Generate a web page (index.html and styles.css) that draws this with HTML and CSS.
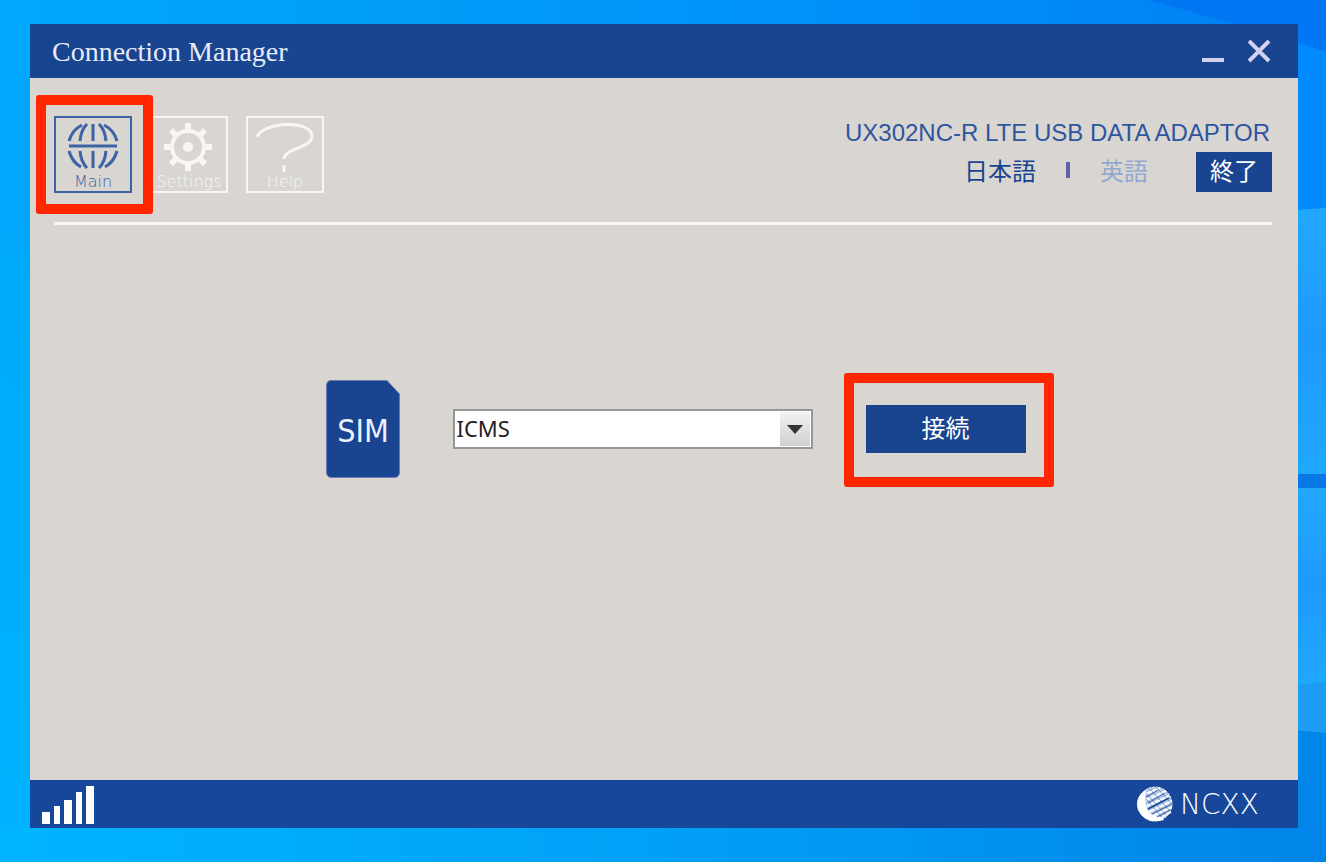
FILE: index.html
```html
<!DOCTYPE html>
<html lang="ja">
	<head>
		<meta charset="UTF-8">
		<meta name="viewport" content="width=device-width, initial-scale=1">
		<title>Connection Manager</title>
		<link rel="stylesheet" href="styles.css">
	</head>
	<body>

		<svg class="wallpaper" viewBox="0 0 1326 862" preserveAspectRatio="none" aria-hidden="true">
			<defs>
				<linearGradient id="pane" x1="0" y1="0" x2="0" y2="1">
					<stop offset="0" stop-color="#22a8ff"/>
					<stop offset=".5" stop-color="#1e9aff"/>
					<stop offset="1" stop-color="#20a8ff"/>
				</linearGradient>
				<linearGradient id="floor">
					<stop offset="0" stop-color="#00b4ff"/>
					<stop offset=".5" stop-color="#00a0f6"/>
					<stop offset="1" stop-color="#0084e8"/>
				</linearGradient>
			</defs>
			<path d="M1150 0H1326V60L1296 44L1240 26Z" fill="#0076f2"/>
			<path d="M1280 36L1326 52V218L1280 222Z" fill="#008aff"/>
			<path d="M1280 211L1326 208V474H1280Z" fill="url(#pane)"/>
			<path d="M1280 488H1326V682L1280 687Z" fill="url(#pane)"/>
			<path d="M1280 474H1326V488H1280Z" fill="#0878e6"/>
			<path d="M1280 687L1326 682V733L1280 729Z" fill="#1e9cf4"/>
			<path d="M1280 729L1326 733V828H1280Z" fill="#0086e8"/>
			<path d="M0 826H1326V862H0Z" fill="url(#floor)"/>
		</svg>

		<div class="window">
			<header class="titlebar">
				<h1>Connection Manager</h1>
				<div class="window-buttons">
					<button type="button" aria-label="Minimize">
						<svg width="24" height="24" viewBox="0 0 24 24"><path d="M0 20H22" stroke-width="4"/></svg>
					</button>
					<button type="button" aria-label="Close">
						<svg width="24" height="24" viewBox="0 0 24 24"><path d="M1 1L21 21M21 1L1 21" stroke-width="4"/></svg>
					</button>
				</div>
			</header>

			<main>
				<div class="toolbar">
					<nav>
						<div class="marked marked-nav">
							<button type="button" class="tab active">
								<svg width="52" height="46" viewBox="0 0 52 46">
									<path d="M2 23H50" stroke-width="3"/>
									<path d="M26 1V18M26 28V45M20 1Q14 7 13 18M32 1Q38 7 39 18M15 2Q5 7 2 18M37 2Q47 7 50 18M13 28Q14 39 20 45M39 28Q38 39 32 45M2 28Q5 39 14 44M50 28Q47 39 38 44" stroke-width="3"/>
								</svg>
								Main
							</button>
						</div>
						<button type="button" class="tab">
							<svg width="52" height="50" viewBox="0 0 52 50">
								<circle cx="25" cy="24" r="16" stroke-width="4"/>
								<circle cx="25" cy="24" r="5" fill="currentColor" stroke="none"/>
								<path d="M25 0V8M25 40V48M1 24H9M41 24H49M8 7L13 12M37 36L42 41M42 7L37 12M13 36L8 41" stroke-width="6"/>
							</svg>
							Settings
						</button>
						<button type="button" class="tab">
							<svg width="62" height="50" viewBox="0 0 62 50">
								<path d="M3 14C9 -2 58 -3 58 13C58 25 31 25 30 36M30 42V49" stroke-width="3"/>
							</svg>
							Help
						</button>
					</nav>

					<div class="device">
						<p>UX302NC-R LTE USB DATA ADAPTOR</p>
						<div class="device-actions">
							<div class="languages">
								<a href="#ja">日本語</a>
								<span class="bar"></span>
								<a href="#en" class="dim">英語</a>
							</div>
							<button type="button" class="quit">終了</button>
						</div>
					</div>
				</div>

				<form class="connect" action="#">
					<svg class="sim" width="74" height="98" viewBox="0 0 74 98" role="img" aria-label="SIM">
						<path d="M5 .5H61L73.500 14V92Q73.500 97.500 68 97.500H6Q.5 97.500 .5 92V6Q.5 .5 5 .5Z"/>
						<text x="37" y="62" text-anchor="middle">SIM</text>
					</svg>
					<div class="profile">
						<select aria-label="Profile">
							<option>ICMS</option>
						</select>
						<span class="arrow"></span>
					</div>
					<div class="marked marked-connect">
						<button type="submit">接続</button>
					</div>
				</form>
			</main>

			<footer>
				<svg class="signal" width="53" height="39" viewBox="0 0 53 39" role="img" aria-label="Signal">
					<path d="M0 27H8V39H0ZM12 21H18V39H12ZM22 15H30V39H22ZM34 7H40V39H34ZM44 1H52V39H44Z"/>
				</svg>
				<div class="brand">
					<svg width="38" height="38" viewBox="0 0 38 38" aria-hidden="true">
						<circle cx="19" cy="19" r="17" fill="#b4c6e6" stroke="#fff" stroke-dasharray="2 1.500"/>
						<path d="M10 5Q-2 12 2 25Q9 40 28 35L26 32Q14 32 11 24Q8 16 10 5Z" fill="#fff" stroke="none"/>
						<path d="M10 9L24 3M10 15L30 6M11 21L33 11M13 27L36 16M17 31L36 22M23 34L35 27" stroke="#fff" stroke-width="2"/>
						<path d="M12 24L33 13" stroke="#17479a" stroke-width="1.500"/>
						<path d="M12 18L29 8M16 29L36 19M10 12L22 5M21 32L34 25" stroke="#17479a" stroke-width=".8"/>
						<path d="M14 4L34 26M20 2L36 19M10 8L30 30M10 14L26 32" stroke="#17479a" stroke-width=".5"/>
					</svg>
					<span>NCXX</span>
				</div>
			</footer>
		</div>

	</body>
</html>
```
FILE: styles.css
```css
* {
	box-sizing: border-box;
}
body {
	display: flex;
	min-height: 100vh;
	margin: 0;
	padding: 24px 28px 34px 30px;
	background:
		linear-gradient(to bottom, transparent 20%, rgba(0, 190, 255, .5)),
		linear-gradient(to right, #00a8fb, #009cf8 35%, #008ffa 65%, #0080f4);
	font-family: "Liberation Sans", "Noto Sans CJK JP", sans-serif;
	font-size: 24px;
	color: #19448f;
}
button,
select {
	margin: 0;
	padding: 0;
	border: 0;
	border-radius: 0;
	background: none;
	color: inherit;
	font: inherit;
}
svg {
	display: block;
	fill: none;
	stroke: currentColor;
}
.wallpaper {
	position: absolute;
	inset: 0;
	width: 100%;
	height: 100%;
	stroke: none;
}

/* Window frame */
.window {
	position: relative;
	flex: 1;
	display: flex;
	flex-direction: column;
	background: #d9d5d1;
}
.titlebar {
	display: flex;
	align-items: center;
	justify-content: space-between;
	height: 54px;
	padding: 2px 26px 0 22px;
	background: #19448f;
	color: #e8ecfa;
}
h1 {
	margin: 0;
	font-family: "Liberation Serif", serif;
	font-size: 28px;
	font-weight: normal;
	line-height: 32px;
}
.window-buttons {
	display: flex;
	gap: 22px;
	color: #d4d0f0;
}

/* Toolbar */
main {
	flex: 1;
	padding: 38px 26px 0 24px;
}
.toolbar {
	display: flex;
	align-items: flex-start;
	justify-content: space-between;
	padding-bottom: 29px;
	border-bottom: 3px solid #f7f6f4;
}
nav {
	display: flex;
	gap: 18px;
}
.tab {
	display: flex;
	flex-direction: column;
	align-items: center;
	justify-content: space-between;
	width: 78px;
	height: 77px;
	padding: 5px 0 0;
	border: 2px solid;
	color: #f7f6f5;
	font-family: "DejaVu Sans", sans-serif;
	font-size: 16px;
	font-weight: 200;
	line-height: 18px;
}
.tab.active {
	color: #3d63a6;
}
.device {
	padding-top: 3px;
}
.device p {
	margin: 0;
	padding: 0 2px 5px 0;
	line-height: 28px;
	color: #2d55a0;
}
.device-actions,
.languages {
	display: flex;
	align-items: center;
}
.device-actions {
	justify-content: flex-end;
	gap: 48px;
}
.languages {
	gap: 30px;
}
.languages,
.quit,
.connect button {
	padding-bottom: 4px;
	font-family: "Noto Sans CJK JP", sans-serif;
	line-height: 24px;
}
.languages a {
	color: inherit;
	text-decoration: none;
}
.languages .dim {
	color: #92a8d0;
}
.bar {
	width: 4px;
	height: 16px;
	background: #5b62a6;
}
.quit,
.connect button {
	background: #19448f;
	color: #fff;
}
.quit {
	width: 76px;
	height: 40px;
}

/* Highlight frames */
.marked {
	position: relative;
}
.marked::after {
	content: "";
	position: absolute;
	border: 10px solid #ff2600;
	border-radius: 3px;
	pointer-events: none;
}
.marked-nav::after {
	inset: -21px -21px -21px -18px;
}
.marked-connect::after {
	inset: -32px -28px -34px -22px;
}

/* Connection form */
.connect {
	display: flex;
	align-items: center;
	justify-content: center;
	gap: 53px;
	padding: 155px 0 40px 25px;
}
.sim {
	fill: #19448f;
	stroke: #6f78b8;
}
.sim text {
	fill: #eef1ff;
	stroke: none;
	font-family: "Liberation Sans Narrow", "DejaVu Sans Condensed", sans-serif;
	font-size: 32px;
}
.profile {
	position: relative;
	width: 360px;
}
.profile select {
	display: block;
	appearance: none;
	width: 100%;
	height: 40px;
	padding: 0 36px 2px 2px;
	border: 2px solid #969696;
	background: #fff;
	color: #222;
	font-family: "Noto Sans", sans-serif;
	font-size: 22px;
}
.arrow {
	position: absolute;
	inset: 3px 3px 3px auto;
	display: grid;
	place-items: center;
	width: 30px;
	background: linear-gradient(#f2f2f2, #cfcfcf);
	pointer-events: none;
}
.arrow::before {
	content: "";
	border: 8px solid transparent;
	border-top: 9px solid #333;
	border-bottom: 0;
}
.connect button {
	display: block;
	width: 160px;
	height: 48px;
}

/* Status bar */
footer {
	display: flex;
	align-items: center;
	justify-content: space-between;
	height: 48px;
	padding: 0 26px 0 12px;
	background: #17479a;
	color: #fff;
}
.signal {
	fill: #fff;
	stroke: none;
}
.brand {
	display: flex;
	align-items: center;
	gap: 6px;
	min-width: 136px;
	font-family: "DejaVu Sans", sans-serif;
	font-size: 28px;
	font-weight: 200;
}
```
